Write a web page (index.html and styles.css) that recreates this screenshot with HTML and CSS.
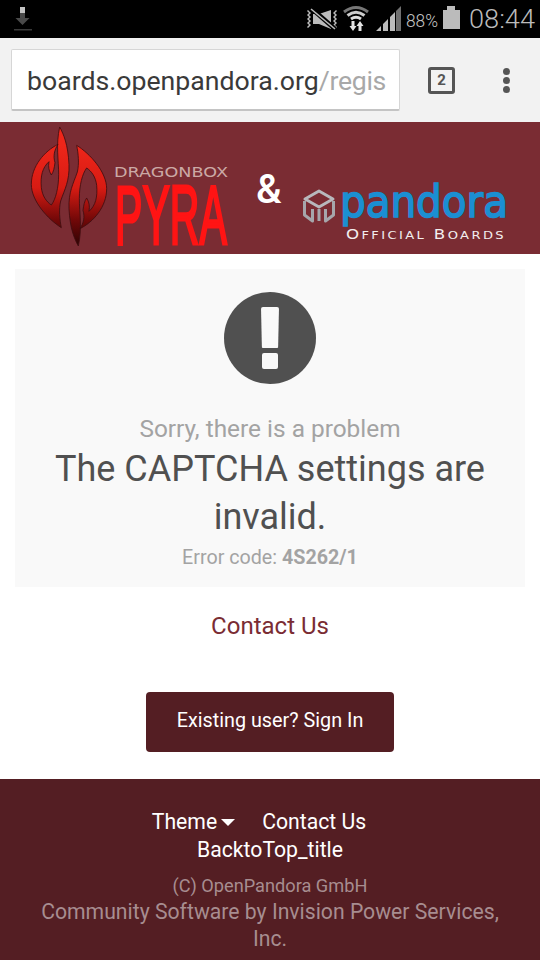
FILE: index.html
```html
<!DOCTYPE html>
<html lang="en">
<head>
<meta charset="utf-8">
<title>Sorry, there is a problem</title>
<link rel="stylesheet" href="styles.css">
</head>
<body>
<div class="status">
  <svg width="540" height="38" viewBox="0 0 540 38">
    <path d="M20 7h5v6h-5z" fill="#c4c4c4"/><path d="M20 13h5v5h4.500l-7 7-7-7h4.500z" fill="#4a4a4a"/><rect x="14" y="29" width="18" height="1.500" fill="#3a3a3a"/>
    <g fill="#bbb">
      <path d="M307 11l2 2-2 2 2 2-2 2 2 2-2 2 2 2-2 2 1 1 3-3-2-2 2-2-2-2 2-2-2-2 2-2-3-3z"/>
      <path d="M337 11l-2 2 2 2-2 2 2 2-2 2 2 2-2 2 2 2-1 1-3-3 2-2-2-2 2-2-2-2 2-2-2-2 3-3z"/>
      <path d="M313 14h6l12-4v19l-12-5h-6z"/>
    </g>
    <path d="M311 8l24 21" stroke="#000" stroke-width="4.500"/><path d="M311 9l24 20" stroke="#bbb" stroke-width="1.600"/>
    <g fill="none" stroke-width="3">
      <path d="M344 12Q356 3 368 12" stroke="#777"/>
      <path d="M347.500 15.500Q356 9 364.500 15.500" stroke="#ccc"/>
      <path d="M351 19Q356 15.500 361 19" stroke="#ddd"/>
    </g>
    <path d="M351.500 21h3v5h2l-3.500 5-3.500-5h2zM358.500 31h3v-5h2l-3.500-5-3.500 5h2z" fill="#e4e4e4"/>
    <path d="M376 31L381 26V31ZM383 31V24L388 19V31ZM390 31V17L395 12V31Z" fill="#bbb"/><path d="M396 31V11L401 6V31Z" fill="#707070"/>
    <path d="M443 10h4v-4h8v4h5v19h-17z" fill="#bbb"/>
    <text class="st-pct" x="406" y="27" textLength="32" lengthAdjust="spacingAndGlyphs">88%</text>
    <text class="st-time" x="469" y="27.500" textLength="66" lengthAdjust="spacingAndGlyphs">08:44</text>
  </svg>
</div>

<div class="toolbar">
  <div class="urlbox"><span class="url-host">boards.openpandora.org</span><span class="url-path">/regis</span></div>
  <div class="tabs">2</div>
  <div class="menu"><i></i><i></i><i></i></div>
</div>

<header class="banner">
  <svg class="banner-art" width="540" height="132" viewBox="0 122 540 132">
    <defs>
      <linearGradient id="flame-a" gradientUnits="userSpaceOnUse" x1="0" y1="70" x2="0" y2="372">
        <stop offset="0" stop-color="#ee261a"/><stop offset=".42" stop-color="#d81b13"/><stop offset=".74" stop-color="#720808"/><stop offset="1" stop-color="#2d0303"/>
      </linearGradient>
      <linearGradient id="flame-b" gradientUnits="userSpaceOnUse" x1="0" y1="317" x2="0" y2="15">
        <stop offset="0" stop-color="#ee261a"/><stop offset=".42" stop-color="#d81b13"/><stop offset=".74" stop-color="#720808"/><stop offset="1" stop-color="#2d0303"/>
      </linearGradient>
      <path id="flame-half" d="M155 70C195 95 245 150 245 200C245 255 205 300 165 320C176 303 180 285 174 265C176 250 178 238 185 228C192 240 195 252 192 268C212 250 218 225 215 190C212 165 200 148 185 138C172 155 163 190 163 230C163 270 172 320 160 372C148 350 135 320 132 260C130 210 145 185 157 150C163 125 160 95 155 70Z"/>
    </defs>
    <g transform="translate(25 122) scale(.33333)" stroke="#3e0d10" stroke-width="2.500">
      <use href="#flame-half" fill="url(#flame-a)"/>
      <use href="#flame-half" fill="url(#flame-b)" transform="rotate(180 132 193.500)"/>
    </g>
    <text class="l-db" x="114" y="177" textLength="114" lengthAdjust="spacingAndGlyphs">DRAGONBOX</text>
    <text class="l-pyra" transform="translate(115 244) scale(.489 1)">PYRA</text>
    <text class="l-amp" x="256" y="203">&amp;</text>
    <g fill="none" stroke="#b8b8bc" stroke-width="3" stroke-linejoin="round">
      <path d="M319 191l14 8-14 8-14-8z"/>
      <path d="M304.500 201v14l8 6v-12M333.500 201v14l-8 6v-12M319 209v12" stroke="#a6a6ab"/>
    </g>
    <text class="l-pandora" x="340" y="217" textLength="168" lengthAdjust="spacingAndGlyphs">pandora</text>
    <text class="l-boards" x="346" y="239" textLength="160" lengthAdjust="spacingAndGlyphs">O<tspan class="small">FFICIAL</tspan> B<tspan class="small">OARDS</tspan></text>
  </svg>
</header>

<main class="content">
  <section class="card">
    <div class="alert"><span class="bang"></span><span class="dot"></span></div>
    <p class="sorry">Sorry, there is a problem</p>
    <h1 class="message">The CAPTCHA settings are invalid.</h1>
    <p class="code">Error code: <strong>4S262/1</strong></p>
  </section>
  <a class="contact">Contact Us</a>
  <a class="signin">Existing user? Sign In</a>
</main>

<footer class="footer">
  <div class="links">
    <span class="theme">Theme<span class="caret"></span></span>
    <span class="foot-contact">Contact Us</span>
    <span>BacktoTop_title</span>
  </div>
  <p class="copy">(C) OpenPandora GmbH</p>
  <p class="power">Community Software by Invision Power Services, Inc.</p>
</footer>
</body>
</html>
```

FILE: styles.css
```css
* { box-sizing: border-box; }
html, body { margin: 0; padding: 0; }
body { width: 540px; height: 960px; overflow: hidden; font-family: Roboto, "Liberation Sans", sans-serif; background: #fff; color: #505050; }
p, h1 { margin: 0; }
svg { display: block; }
.banner-art { overflow: visible; }

.status { height: 38px; background: #000; }
.st-pct { font-family: Roboto, sans-serif; font-weight: 300; font-size: 18px; fill: #c4c4c4; }
.st-time { font-family: Roboto, sans-serif; font-weight: 300; font-size: 26px; fill: #bbb; }

.toolbar { height: 84px; background: #f2f2f2; display: flex; align-items: flex-start; padding: 11px 0 0 11px; }
.urlbox { width: 389px; height: 62px; background: #fff; border-radius: 2px; border: 1px solid #d6d6d6; border-bottom: 2px solid #c4c4c4; padding: 0 0 0 15px; font-size: 26.670px; line-height: 62px; white-space: nowrap; overflow: hidden; }
.url-host { color: #3a3a3a; }
.url-path { color: #a8a8a8; letter-spacing: -.3px; }
.tabs { width: 27px; height: 27px; margin: 18px 0 0 28px; border: 3px solid #555; border-radius: 3px; font-size: 15px; font-weight: 700; line-height: 21px; text-align: center; color: #555; }
.menu { display: flex; flex-direction: column; gap: 2px; margin: 19px 0 0 48px; }
.menu i { display: block; width: 7px; height: 7px; border-radius: 50%; background: #555; }

.banner { height: 132px; background: #7a2c33; }
.l-db { font-family: "DejaVu Sans", sans-serif; font-size: 14px; fill: #cba9a5; }
.l-pyra { font-family: "Liberation Sans", sans-serif; font-size: 84px; fill: #ff1414; stroke: #ff1414; stroke-width: 2.500px; vector-effect: non-scaling-stroke; }
.l-amp { font-family: Roboto, sans-serif; font-weight: 500; font-size: 40px; fill: #fff; }
.l-pandora { font-family: "DejaVu Sans", sans-serif; font-size: 44px; fill: #1b8fd2; stroke: #1b8fd2; stroke-width: 1.600px; }
.l-boards { font-family: "DejaVu Sans", sans-serif; font-size: 14px; letter-spacing: 2px; fill: #f2eeee; }
.l-boards .small { font-size: 11px; }

.content { display: flex; flex-direction: column; align-items: center; padding: 15px 15px 0; height: 525px; }
.card { width: 510px; height: 318px; background: #f9f9f9; padding: 23px 0 0; display: flex; flex-direction: column; align-items: center; text-align: center; }
.alert { width: 92px; height: 92px; border-radius: 50%; background: #505050; display: flex; flex-direction: column; align-items: center; padding-top: 15px; gap: 5px; margin-bottom: 29px; flex: none; }
.bang { display: block; width: 18px; height: 41px; background: #f9f9f9; border-radius: 2px; clip-path: polygon(0 0, 100% 0, 95% 100%, 5% 100%); }
.dot { display: block; width: 16px; height: 16px; background: #f9f9f9; border-radius: 2px; }
.sorry { font-size: 24.400px; line-height: 32px; color: #a3a3a3; }
.message { font-size: 36px; font-weight: 400; line-height: 48px; color: #505050; width: 460px; }
.code { font-size: 19.700px; line-height: 32px; margin-top: 1px; color: #a3a3a3; }
.code strong { font-weight: 700; }
.contact { margin-top: 23px; font-size: 24px; line-height: 32px; color: #7a2c33; }
.signin { margin-top: 50px; width: 248px; height: 60px; background: #541e23; border-radius: 4px; color: #fff; font-size: 19.800px; line-height: 58px; text-align: center; }

.footer { height: 181px; background: #541e23; padding-top: 29px; text-align: center; }
.links { display: flex; flex-wrap: wrap; justify-content: center; column-gap: 27px; width: 300px; margin: 0 auto; font-size: 21.200px; line-height: 28px; color: #fff; }
.theme { display: inline-flex; align-items: center; }
.foot-contact { margin-right: 22px; }
.caret { width: 0; height: 0; margin-left: 4px; border: 7px solid transparent; border-top: 7px solid #fff; border-bottom: 0; }
.copy { font-size: 18.200px; line-height: 26px; margin-top: 9px; color: #a78d90; }
.power { font-size: 21.200px; line-height: 27px; margin: -1px auto 0; color: #a78d90; width: 480px; }
```
